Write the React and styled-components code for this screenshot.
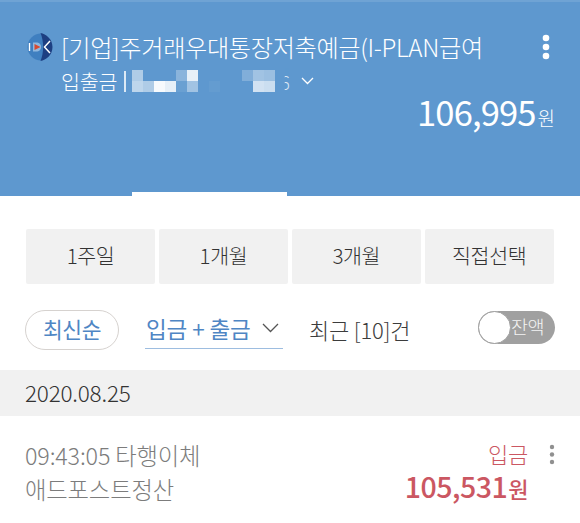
import React from "react";
import styled, { createGlobalStyle } from "styled-components";

const Global = createGlobalStyle`
  html, body { margin: 0; padding: 0; background: #fff; }
  body { width: 580px; height: 523px; overflow: hidden; font-family: "Noto Sans CJK KR", "Noto Sans", sans-serif; font-weight: 300; }
`;
const Page = styled.div`width: 580px; height: 523px; overflow: hidden; background: #fff;`;
const Header = styled.header`
  height: 196px; box-sizing: border-box; background: #5e98cf; border-top: 2px solid #6fa3d4;
  padding: 27px 20px 0 26px; color: #fff; display: flex; flex-direction: column; position: relative;
`;
const TitleRow = styled.div`display: flex; align-items: center; height: 36px;`;
const Logo = styled.svg`width: 27px; height: 30px; flex: none; margin-right: 8px;`;
const Title = styled.h1`
  margin: 0; font-size: 24.2px; font-weight: 300; line-height: 36px; white-space: nowrap; letter-spacing: -0.35px; width: 424px;
`;
const Kebab = styled.svg`width: 8px; height: 26px; flex: none; margin-left: 57px;`;
const AccountRow = styled.div`display: flex; align-items: center; height: 30px; margin: 1px 0 0 35px; font-size: 20.6px; letter-spacing: -0.2px;`;
const Sep = styled.span`width: 1.5px; height: 21px; background: #dce9f5; margin: 0 6px 0 7px;`;
const Mosaic = styled.svg`width: 143px; height: 22px; flex: none;`;
const Digit = styled.span`font-size: 19px; margin-left: 5px; opacity: .75; clip-path: inset(0 0 0 50%);`;
const Chevron = styled.svg`width: 13px; height: 8px; margin-left: 11px;`;
const Balance = styled.div`display: flex; justify-content: flex-end; align-items: baseline; margin: -8px 5px 0 0; font-size: 34.6px; line-height: 46px; font-weight: 400; letter-spacing: -0.9px;`;
const Won = styled.span`font-size: 19px; font-weight: 300; margin-left: 2px; letter-spacing: 0;`;
const ActiveTab = styled.span`position: absolute; left: 132px; bottom: 0; width: 155px; height: 4px; background: #fff;`;
const Periods = styled.div`display: grid; grid-template-columns: repeat(4, 129px); gap: 3.9px; margin: 33px 0 0 26px;`;
const Period = styled.button`
  height: 55px; border: 0; border-radius: 2px; padding: 0 0 3px; background: #f1f1f1; color: #333; font: 300 20.6px "Noto Sans CJK KR", sans-serif; letter-spacing: -0.4px;
`;
const Filters = styled.div`display: flex; align-items: flex-start; height: 60px; margin-top: 26px; padding-left: 25px;`;
const Sort = styled.div`
  width: 94px; height: 40px; box-sizing: border-box; border: 1.5px solid #d6d2cf; border-radius: 20px; color: #4f86c4; padding-bottom: 3px;
  display: flex; align-items: center; justify-content: center; font-size: 21.5px; font-weight: 400; letter-spacing: -0.4px;
`;
const Select = styled.div`
  width: 138px; height: 39px; box-sizing: border-box; margin-left: 26px; border-bottom: 1.5px solid #9dbde0; color: #4f86c4;
  display: flex; align-items: center; padding: 0 0 2px 1px; font-size: 22.5px; font-weight: 400; letter-spacing: -0.1px; white-space: nowrap;
`;
const SelectChevron = styled.svg`width: 17px; height: 10px; margin-left: 11px; flex: none;`;
const Count = styled.div`margin-left: 26px; width: 169px; height: 38px; line-height: 38px; font-size: 22px; color: #3c3c3c; white-space: nowrap; letter-spacing: -0.2px;`;
const Toggle = styled.div`
  width: 77px; height: 33px; margin-top: 1px; box-sizing: border-box; border-radius: 17px; background: #a0a0a0; color: #f4f4f4; position: relative;
  font-size: 18.5px; line-height: 31px; padding-left: 33px; letter-spacing: -0.4px;
`;
const Knob = styled.span`position: absolute; left: 0; top: 0; width: 31px; height: 31px; background: #fff; border: 1px solid #a0a0a0; border-radius: 50%;`;
const DateBand = styled.div`height: 46px; background: #f1f1f1; padding-left: 25px; font-size: 22.500px; line-height: 45px; color: #333; letter-spacing: -0.2px;`;
const Row = styled.div`display: flex; justify-content: space-between; padding: 22px 25px 0 25px;`;
const Left = styled.div`font-size: 23.3px; line-height: 34px; color: #7c7c7c; letter-spacing: -0.15px;`;
const Right = styled.div`display: flex; flex-direction: column; align-items: flex-end; padding-right: 27px; color: #cb5762; position: relative;`;
const Kind = styled.div`font-size: 22px; line-height: 31px; letter-spacing: -0.3px;`;
const Amount = styled.div`font-size: 28.500px; line-height: 33px; font-weight: 500; letter-spacing: -0.5px;`;
const AmountWon = styled.span`font-size: 22px; margin-left: 1px;`;
const RowKebab = styled.svg`position: absolute; right: 0; top: 6px; width: 6px; height: 22px;`;

const cells = [
  [0,0,.5],[0,1,.6],[1,1,.5],[2,1,.95],[3,1,.85],[4,0,.28],[5,0,.85],[5,1,.42],[4,1,.08],
  [7,1,.04],[10,0,.22],[11,0,.42],[12,0,.38],[11,1,.72],[12,1,.68],
];

export default function App() {
  return (
    <Page>
      <Global />
      <Header>
        <TitleRow>
          <Logo viewBox="0 0 27 30">
            <path d="M15 1.500A13.500 13.500 0 1 0 15 28.500C19 21 19 9 15 1.500Z" fill="#3f7fc0" />
            <path d="M14.500 1C20 2 26.500 7 26.500 15S20 28 14.500 29C18 21 18 9 14.500 1Z" fill="#1d3f82" />
            <path d="M3.500 11v8" stroke="#fff" strokeWidth="1.400" fill="none" />
            <path d="M7 10.500h3c3.500 0 5 2 5 4.500s-1.500 4.500-5 4.500H7Z" fill="#8fb7de" />
            <path d="M8.500 12l6 3-6 3Z" fill="#d8492f" />
            <path d="M24 9l-5.500 6 5.500 6" stroke="#fff" strokeWidth="1.500" fill="none" />
          </Logo>
          <Title>[기업]주거래우대통장저축예금(I-PLAN급여</Title>
          <Kebab viewBox="0 0 8 26"><circle cx="4" cy="4" r="3.300" fill="#fff" /><circle cx="4" cy="13" r="3.300" fill="#fff" /><circle cx="4" cy="22" r="3.300" fill="#fff" /></Kebab>
        </TitleRow>
        <AccountRow>
          입출금<Sep />
          <Mosaic viewBox="0 0 143 22">
            {cells.map(([x, y, o]) => <rect key={`${x}-${y}`} x={x * 11} y={y * 11} width="11" height="11" fill="#fff" opacity={o} />)}
          </Mosaic>
          <Digit>6</Digit>
          <Chevron viewBox="0 0 13 8"><path d="M1 1l5.500 5.500L12 1" stroke="#fff" strokeWidth="1.300" fill="none" /></Chevron>
        </AccountRow>
        <Balance>106,995<Won>원</Won></Balance>
        <ActiveTab />
      </Header>
      <Periods>
        <Period>1주일</Period><Period>1개월</Period><Period>3개월</Period><Period>직접선택</Period>
      </Periods>
      <Filters>
        <Sort>최신순</Sort>
        <Select>입금 + 출금<SelectChevron viewBox="0 0 17 10"><path d="M1 1l7.500 7.500L16 1" stroke="#555" strokeWidth="1.300" fill="none" /></SelectChevron></Select>
        <Count>최근 [10]건</Count>
        <Toggle><Knob />잔액</Toggle>
      </Filters>
      <DateBand>2020.08.25</DateBand>
      <Row>
        <Left><div>09:43:05 타행이체</div><div>애드포스트정산</div></Left>
        <Right>
          <Kind>입금</Kind>
          <Amount>105,531<AmountWon>원</AmountWon></Amount>
          <RowKebab viewBox="0 0 6 22"><circle cx="3" cy="3" r="2.200" fill="#909090" /><circle cx="3" cy="10.500" r="2.200" fill="#909090" /><circle cx="3" cy="18" r="2.200" fill="#909090" /></RowKebab>
        </Right>
      </Row>
    </Page>
  );
}
